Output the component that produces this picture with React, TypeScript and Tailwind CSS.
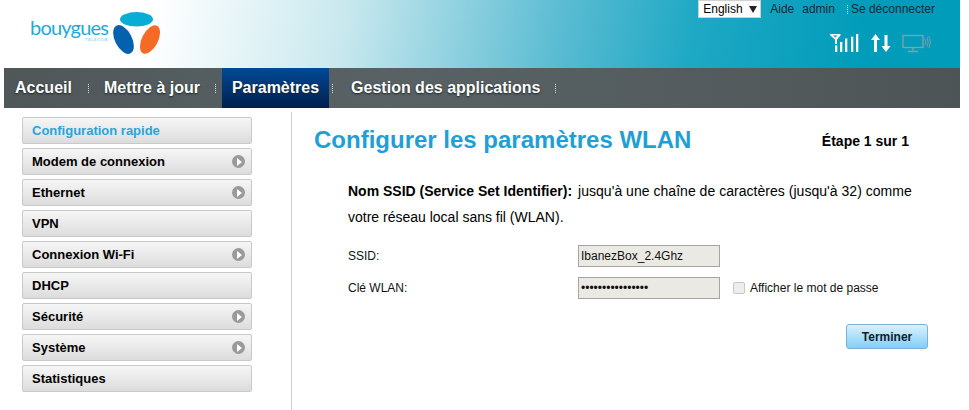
const menuItems = [
  { label: 'Configuration rapide', active: true },
  { label: 'Modem de connexion', arrow: true },
  { label: 'Ethernet', arrow: true },
  { label: 'VPN' },
  { label: 'Connexion Wi-Fi', arrow: true },
  { label: 'DHCP' },
  { label: 'Sécurité', arrow: true },
  { label: 'Système', arrow: true },
  { label: 'Statistiques' },
];

function Dots({ className = '' }: { className?: string }) {
  return <span className={`w-px h-[9px] border-l border-dotted border-[#d8dcdc] ${className}`} />;
}

function Logo() {
  return (
    <div className="flex items-start">
      <div className="mt-[17px] ml-[30px] w-[79px] flex flex-col">
        <span className="block h-[20px] text-[20px] leading-[20px] tracking-[-0.8px] text-[#1fa9d9] font-['Lato','Liberation_Sans',sans-serif]">
          bouygues
        </span>
        <span className="self-end mt-[1px] mr-[1px] text-[3.5px] leading-[4px] font-bold tracking-[0.8px] text-[#8fd3ea]">
          TELECOM
        </span>
      </div>
      <svg width="50" height="42" viewBox="0 0 50 42" className="mt-[12px] ml-[3px]">
        <ellipse cx="24.500" cy="7.300" rx="16.500" ry="7.300" fill="#06aed5" />
        <ellipse cx="11.500" cy="27.500" rx="8.500" ry="15.500" transform="rotate(-27 11.500 27.500)" fill="#0461ad" />
        <ellipse cx="38" cy="27.500" rx="8" ry="15.500" transform="rotate(27 38 27.500)" fill="#f56a25" />
      </svg>
    </div>
  );
}

function StatusIcons() {
  return (
    <div className="flex items-start justify-end mt-[17px] mr-[29px]">
      <svg width="29" height="18" viewBox="0 0 29 18" fill="#fff">
        <path d="M0 0h10.500v1.300L7 5.500V10H5V5.500L0 1.300z" />
        <path d="M2.800 1.300h5L5.300 4z" fill="#4fb4c8" />
        <rect x="5" y="11.500" width="2.300" height="6.500" />
        <rect x="10" y="8" width="2.300" height="10" />
        <rect x="15" y="4.500" width="2.300" height="13.500" />
        <rect x="21" y="2.700" width="2.300" height="15.300" />
        <rect x="26" y="0" width="2.300" height="18" />
      </svg>
      <svg width="20" height="18" viewBox="0 0 20 18" fill="#fff" className="ml-[12px]">
        <path d="M4.500 0 9 6H6v12H3V6H0z" />
        <path d="M15 18 10.500 12H13.500V1h3v11h3z" />
      </svg>
      <svg width="29" height="19" viewBox="0 0 29 19" fill="none" stroke="#8d9ea6" className="ml-[11px]">
        <rect x="1" y="1.500" width="20" height="12" strokeWidth="1.300" />
        <path d="M11 14v2.500M6 17.500h10" strokeWidth="1.500" />
        <path d="M23 5q1.500 3 0 6M25 3.500q2.500 4.500 0 9M27 2q3 6 0 12" strokeWidth="0.900" />
      </svg>
    </div>
  );
}

export default function App() {
  return (
    <div className="w-[969px] h-[410px] overflow-hidden bg-white font-['Liberation_Sans',Arial,sans-serif]">
      <div className="w-[960px]">
        <header className="h-[68px] flex justify-between bg-[linear-gradient(100deg,#ffffff_16%,#c8e8ee_36%,#5bbcd2_58%,#1ea8c4_72%,#009cb9_90%)]">
          <Logo />
          <div>
            <div className="flex items-start h-[17px] text-[12px] text-[#0b2b3a] leading-[18px]">
              <div className="flex items-center w-[63px] h-[18px] pl-[4px] bg-white border border-[#d0d0d0] text-black">
                English
                <span className="ml-[6px] border-x-[4px] border-x-transparent border-t-[7px] border-t-[#222]" />
              </div>
              <span className="ml-[9px]">Aide</span>
              <span className="ml-[8px]">admin</span>
              <Dots className="ml-[12px] mt-[5px]" />
              <span className="ml-[3px] mr-[25px]">Se déconnecter</span>
            </div>
            <StatusIcons />
          </div>
        </header>

        <nav className="ml-[4px] h-[40px] flex items-stretch text-[16px] font-bold text-white bg-[linear-gradient(90deg,#4f5759,#586264_40%,#525a5c_80%,#4c5456)] [text-shadow:0_1px_2px_#1c2224]">
          <a className="pl-[11px] pr-[16px] flex items-center">Accueil</a>
          <Dots className="self-center" />
          <a className="pl-[15px] pr-[15px] flex items-center">Mettre à jour</a>
          <Dots className="self-center" />
          <a className="ml-[6px] px-[10px] flex items-center bg-[linear-gradient(180deg,#004a98,#001f4c)]">Paramètres</a>
          <Dots className="self-center ml-[3px]" />
          <a className="pl-[18px] pr-[15px] flex items-center">Gestion des applications</a>
          <Dots className="self-center" />
        </nav>

        <div className="flex">
          <aside className="w-[292px] h-[302px] mt-[4px] border-r border-[#d0d0d0] pl-[22px] pt-[5px]">
            <ul className="w-[230px] flex flex-col gap-[4px]">
              {menuItems.map(item => (
                <li
                  key={item.label}
                  className="h-[27px] pl-[9px] pr-[6px] flex items-center justify-between border border-[#c9c9c9] rounded-[2px] bg-[linear-gradient(180deg,#f6f6f6,#dcdcdc)] text-[13px] font-bold"
                >
                  <span className={item.active ? 'text-[#2aa5dc]' : 'text-black'}>{item.label}</span>
                  {item.arrow && (
                    <span className="w-[13px] h-[13px] rounded-full bg-[#9a9a9a] flex items-center justify-center">
                      <span className="ml-[2px] border-l-[5px] border-l-white border-y-[4px] border-y-transparent" />
                    </span>
                  )}
                </li>
              ))}
            </ul>
          </aside>

          <main className="flex-1 pl-[22px] pt-[17px]">
            <div className="flex items-end justify-between pr-[51px]">
              <h1 className="text-[24px] leading-[30px] font-bold text-[#1f9fd6]">Configurer les paramètres WLAN</h1>
              <span className="pb-[4px] text-[14px] leading-[20px] font-bold text-black">Étape 1 sur 1</span>
            </div>

            <div className="ml-[34px] mt-[23px] text-[14px] leading-[26px] text-black">
              <p className="flex">
                <b>Nom SSID (Service Set Identifier):</b>
                <span className="ml-[6px] tracking-[0.03px]">jusqu'à une chaîne de caractères (jusqu'à 32) comme</span>
              </p>
              <p>votre réseau local sans fil (WLAN).</p>
            </div>

            <div className="ml-[34px] mt-[15px] text-[12px] text-[#111]">
              <div className="flex items-center h-[22px]">
                <label className="w-[230px]">SSID:</label>
                <div className="w-[142px] h-[22px] pl-[2px] flex items-center bg-[#ebe9e3] border border-[#a5a5a5]">IbanezBox_2.4Ghz</div>
              </div>
              <div className="flex items-center h-[22px] mt-[10px]">
                <label className="w-[230px]">Clé WLAN:</label>
                <div className="w-[142px] h-[22px] pl-[2px] flex items-center bg-[#ebe9e3] border border-[#a5a5a5]">••••••••••••••••</div>
                <span className="ml-[13px] w-[12px] h-[12px] rounded-[2px] border border-[#c8c8c8] bg-[#ededed]" />
                <span className="ml-[5px]">Afficher le mot de passe</span>
              </div>
            </div>

            <div className="mt-[25px] flex justify-end pr-[32px]">
              <button className="w-[82px] h-[25px] rounded-[3px] border border-[#7ab3d6] bg-[linear-gradient(180deg,#dbf1fc,#81cff8)] text-[12px] font-bold text-[#10202c]">
                Terminer
              </button>
            </div>
          </main>
        </div>
      </div>
    </div>
  );
}
